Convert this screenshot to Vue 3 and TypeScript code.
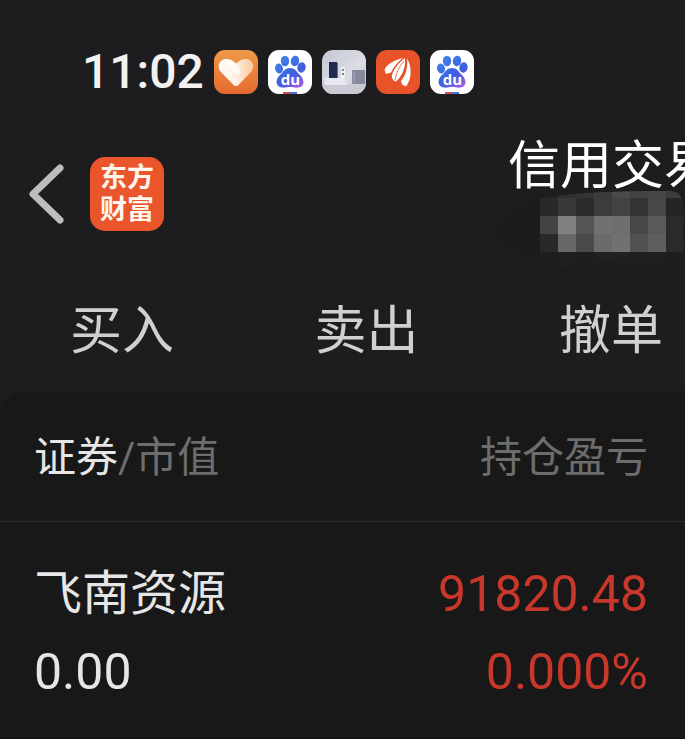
<script setup lang="ts">
interface Holding {
  name: string
  marketValue: string
  profit: string
  profitRate: string
}

const statusTime = '11:02'
const notifications = ['heart', 'paw', 'devices', 'wing', 'paw']
const tabs = ['买入', '卖出', '撤单']
const holdings: Holding[] = [
  { name: '飞南资源', marketValue: '0.00', profit: '91820.48', profitRate: '0.000%' },
]

const cell = 18
const mosaic = [
  ['#252526', '#303031', '#343435', '#3c3c3d', '#4a4a4b', '#434344', '#464647', '#3c3c3d'],
  ['#29292a', '#39393b', '#2b2b2d', '#3c3c3d', '#434344', '#343436', '#474749', '#242425'],
  ['#434344', '#818181', '#555556', '#717171', '#6f6f6f', '#474749', '#59595b', '#2a2a2b'],
  ['#29292b', '#686868', '#4a4a4a', '#6a6a6a', '#717171', '#515153', '#5e5e60', '#2a2a2b'],
  ['#1e1e1f', '#1f1f20', '#1e1e1f', '#202021', '#212122', '#1f1f20', '#1f1f20', '#1d1d1f'],
]
</script>

<template>
  <main class="screen">
    <div class="status">
      <span class="time">{{ statusTime }}</span>
      <div class="apps">
        <svg v-for="(icon, i) in notifications" :key="i" class="app" viewBox="0 0 44 44" aria-hidden="true">
          <defs>
            <linearGradient :id="'orange' + i" x1="0" y1="0" x2="0" y2="1">
              <stop offset="0" stop-color="#f09a48" /><stop offset="1" stop-color="#e56a30" />
            </linearGradient>
            <linearGradient :id="'heart' + i" x1="0" y1="0" x2="1" y2="0">
              <stop offset="0" stop-color="#fff" /><stop offset="0.5" stop-color="#fff0e0" /><stop offset="1" stop-color="#f8c99c" />
            </linearGradient>
            <linearGradient :id="'blue' + i" gradientUnits="userSpaceOnUse" x1="10" y1="6" x2="34" y2="38">
              <stop offset="0" stop-color="#3f86ea" /><stop offset="0.6" stop-color="#3d5fe0" /><stop offset="1" stop-color="#b15bdc" />
            </linearGradient>
            <linearGradient :id="'wall' + i" x1="0" y1="0" x2="1" y2="1">
              <stop offset="0" stop-color="#c3c6d2" /><stop offset="0.6" stop-color="#dcdde5" /><stop offset="1" stop-color="#b6b9c5" />
            </linearGradient>
            <clipPath :id="'round' + i"><rect width="44" height="44" rx="11" /></clipPath>
          </defs>
          <g v-if="icon === 'heart'">
            <rect width="44" height="44" rx="11" :fill="'url(#orange' + i + ')'" />
            <path d="M19 34.500L7 22C2 16 6 9 12 9C17 9 19 11 22 13.500C25 11 28 9 32 9C38 9 42 16 37 22L25 34.500Q22 37.500 19 34.500Z" :fill="'url(#heart' + i + ')'" />
            <path d="M11 13L21 24Q24 26 27 22L22 14Q17 9 12 10Z" fill="#fff" opacity="0.7" />
          </g>
          <g v-else-if="icon === 'paw'" :clip-path="'url(#round' + i + ')'">
            <rect width="44" height="44" fill="#fff" />
            <g :fill="'url(#blue' + i + ')'">
              <ellipse cx="11" cy="18.500" rx="4" ry="5" transform="rotate(-12 11 18.500)" />
              <ellipse cx="17" cy="11" rx="4.200" ry="5.200" />
              <ellipse cx="27" cy="11" rx="4.200" ry="5.200" transform="rotate(8 27 11)" />
              <ellipse cx="33.500" cy="17.500" rx="4.200" ry="5.200" transform="rotate(8 33.500 17.500)" />
              <path d="M22 18C27 18 28 21 31 24C36 28 38 36 31 37.500C27 38 25 37 22 37C19 37 17 38 14 37.500C6 36 8 28 13 24C16 21 17 18 22 18Z" />
            </g>
            <text x="22.500" y="35" class="paw-text">du</text>
            <rect x="15" y="42" width="7" height="2" fill="#d94a4a" />
            <rect x="22" y="42" width="7" height="2" fill="#4a6fd0" />
          </g>
          <g v-else-if="icon === 'devices'" :clip-path="'url(#round' + i + ')'">
            <rect width="44" height="44" :fill="'url(#wall' + i + ')'" />
            <path d="M0 34H44V44H0Z" fill="#c9cad4" />
            <path d="M3 28H22L25 34V35H3Z" fill="#e8e9ee" />
            <rect x="7" y="12" width="8" height="16" fill="#202b50" />
            <rect x="15" y="13" width="1" height="15" fill="#66708e" />
            <rect x="19" y="17" width="4" height="11" fill="#f0f1f5" />
            <circle cx="21" cy="20" r="1" fill="#555b6c" /><circle cx="21" cy="24" r="1" fill="#555b6c" />
            <rect x="30" y="20" width="13" height="14" rx="1" fill="#858b9c" />
            <path d="M32 22V33" stroke="#a8adba" />
          </g>
          <g v-else>
            <rect width="44" height="44" rx="11" fill="#e9532a" />
            <g fill="#fff">
              <path d="M27 8C20 10 11 13 8.500 20L10 24L15 22.500C18 16 22 12 27 8Z" />
              <path d="M29 8C24 12 18.500 17 16 25C15.500 28 17 31 20 31.500C25 27 30 19 29 8Z" />
              <path d="M31 8.500C36 17 36 28 30.500 36C27 36 25.500 34 25 31C30 25 32 17 31 8.500Z" />
            </g>
            <path d="M28 11C23 17 20.500 22 19 30" fill="none" stroke="#e9532a" stroke-width="0.8" />
          </g>
        </svg>
      </div>
    </div>

    <header class="header">
      <button class="back" type="button" aria-label="返回">
        <svg viewBox="0 0 36 60" aria-hidden="true"><path d="M32 4L5 30L32 56" /></svg>
      </button>
      <div class="brand"><span>东方</span><span>财富</span></div>
      <div class="account">
        <h1>信用交易</h1>
        <svg class="mask" viewBox="0 0 190 90" aria-hidden="true">
          <defs>
            <clipPath id="brush">
              <path d="M0 50C0 33 24 21 60 16C100 11 140 11 176 11C187 11 190 22 189 43C186 52 190 57 189 65C189 79 177 88 162 88C130 82 105 82 91 82C76 90 55 92 42 78C16 72 0 66 0 50Z" />
            </clipPath>
          </defs>
          <g clip-path="url(#brush)">
            <rect width="190" height="90" fill="#1c1c1d" />
            <template v-for="(row, r) in mosaic" :key="r">
              <rect v-for="(color, c) in row" :key="c" :x="45 + c * cell" :y="r * cell" :width="cell" :height="cell" :fill="color" shape-rendering="crispEdges" />
            </template>
          </g>
        </svg>
      </div>
    </header>

    <nav class="tabs">
      <a v-for="tab in tabs" :key="tab" href="#">{{ tab }}</a>
    </nav>

    <section class="panel">
      <table>
        <thead>
          <tr>
            <th><strong>证券</strong>/市值</th>
            <th>持仓盈亏</th>
          </tr>
        </thead>
        <tbody>
          <tr v-for="item in holdings" :key="item.name">
            <td><div class="name">{{ item.name }}</div><div>{{ item.marketValue }}</div></td>
            <td><div>{{ item.profit }}</div><div>{{ item.profitRate }}</div></td>
          </tr>
        </tbody>
      </table>
    </section>
  </main>
</template>

<style>
body {
  background: #1d1d1f;
}
</style>

<style scoped>
.screen {
  overflow: hidden;
  background: #1d1d1f;
  color: #e6e6e6;
  font-family: Roboto, "Noto Sans CJK SC", sans-serif;
}
.status {
  display: flex;
  align-items: center;
  gap: 10px;
  padding: 44px 0 0 82px;
}
.time {
  color: #f2f2f2;
  font-size: 48px;
  font-weight: 500;
  line-height: 56px;
}
.apps {
  display: flex;
  gap: 10px;
}
.app {
  display: block;
  width: 44px;
  height: 44px;
}
.paw-text {
  fill: #fff;
  font: 700 15px "Open Sans", sans-serif;
  text-anchor: middle;
}
.header {
  display: flex;
  align-items: flex-start;
  padding: 37px 0 0 28px;
}
.back {
  width: 36px;
  height: 60px;
  margin-top: 27px;
  padding: 0;
  border: 0;
  background: none;
}
.back svg {
  display: block;
  width: 100%;
}
.back path {
  fill: none;
  stroke: #bdbdbd;
  stroke-width: 7;
  stroke-linecap: round;
  stroke-linejoin: round;
}
.brand {
  display: flex;
  flex-direction: column;
  align-items: center;
  justify-content: center;
  width: 74px;
  height: 74px;
  margin: 20px 0 0 26px;
  border-radius: 15px;
  background: #ea552b;
  color: #fff6ee;
  font-size: 27px;
  font-weight: 700;
  line-height: 32px;
}
.account {
  width: 190px;
  margin-left: auto;
}
h1 {
  margin: 0;
  padding-left: 13px;
  color: #fff;
  font-size: 52px;
  font-weight: 400;
  line-height: 60px;
  white-space: nowrap;
}
.mask {
  display: block;
  width: 190px;
  height: 90px;
  margin-top: -17px;
}
.tabs {
  display: flex;
  justify-content: space-between;
  padding: 22px 22px 19px 70px;
}
.tabs a {
  color: #d0d0d0;
  font-size: 52px;
  line-height: 80px;
  text-decoration: none;
}
.panel {
  border-top-left-radius: 24px;
  background: #181818;
}
table {
  width: 100%;
  border-collapse: collapse;
}
th {
  height: 126px;
  padding: 4px 0 0 34px;
  border-bottom: 1px solid #2a2a2a;
  color: #6d6d6d;
  font-size: 42px;
  font-weight: 400;
  line-height: 60px;
  text-align: left;
}
th strong {
  color: #e6e6e6;
  font-weight: 400;
}
td {
  padding: 33px 0 27px 34px;
  border-bottom: 1px solid #111;
  font-size: 50px;
  line-height: 78px;
}
.name {
  font-size: 48px;
}
th:last-child,
td:last-child {
  padding-right: 37px;
  text-align: right;
}
td:last-child {
  color: #c8372b;
}
</style>
